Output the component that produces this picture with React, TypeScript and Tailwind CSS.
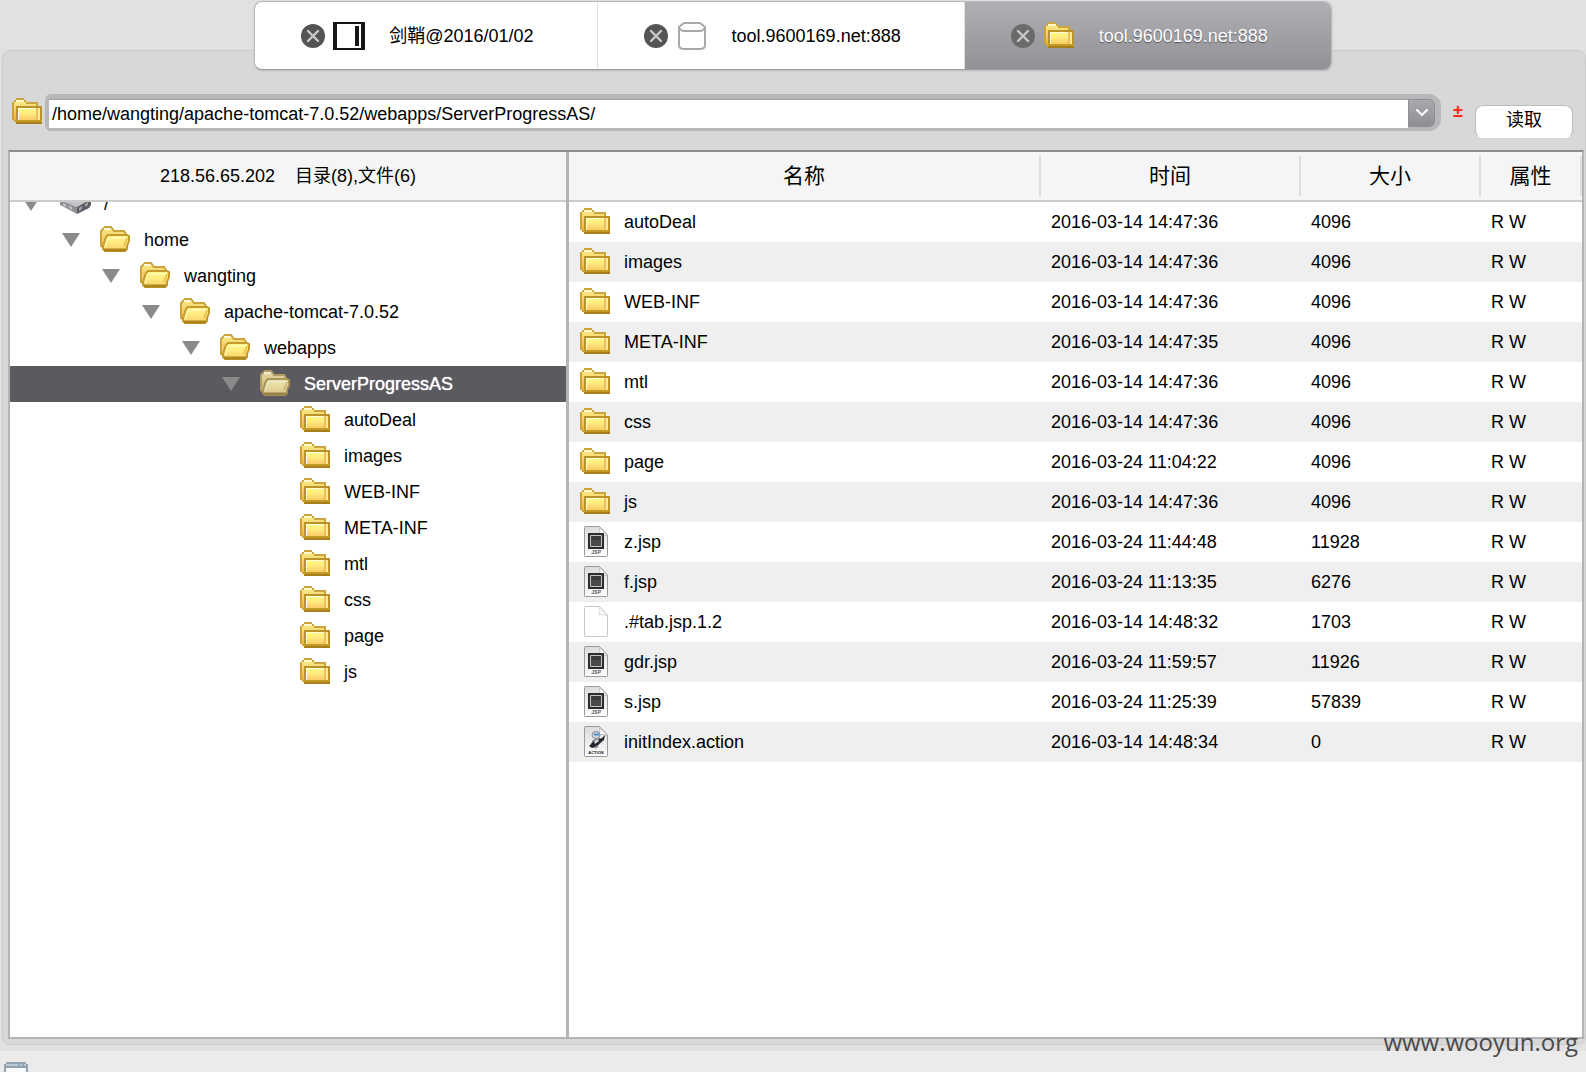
import { useState } from 'react'
import { clsx } from 'clsx'

type IconKind = 'folder' | 'jsp' | 'blank' | 'action'

interface TreeNode {
  name: string
  depth: number
  icon: 'drive' | 'open' | 'folder'
  selected?: boolean
}

interface FileEntry {
  name: string
  time: string
  size: string
  icon: IconKind
}

const tree: TreeNode[] = [
  { name: '/', depth: 0, icon: 'drive' },
  { name: 'home', depth: 1, icon: 'open' },
  { name: 'wangting', depth: 2, icon: 'open' },
  { name: 'apache-tomcat-7.0.52', depth: 3, icon: 'open' },
  { name: 'webapps', depth: 4, icon: 'open' },
  { name: 'ServerProgressAS', depth: 5, icon: 'open', selected: true },
  { name: 'autoDeal', depth: 6, icon: 'folder' },
  { name: 'images', depth: 6, icon: 'folder' },
  { name: 'WEB-INF', depth: 6, icon: 'folder' },
  { name: 'META-INF', depth: 6, icon: 'folder' },
  { name: 'mtl', depth: 6, icon: 'folder' },
  { name: 'css', depth: 6, icon: 'folder' },
  { name: 'page', depth: 6, icon: 'folder' },
  { name: 'js', depth: 6, icon: 'folder' },
]

const files: FileEntry[] = [
  { name: 'autoDeal', time: '2016-03-14 14:47:36', size: '4096', icon: 'folder' },
  { name: 'images', time: '2016-03-14 14:47:36', size: '4096', icon: 'folder' },
  { name: 'WEB-INF', time: '2016-03-14 14:47:36', size: '4096', icon: 'folder' },
  { name: 'META-INF', time: '2016-03-14 14:47:35', size: '4096', icon: 'folder' },
  { name: 'mtl', time: '2016-03-14 14:47:36', size: '4096', icon: 'folder' },
  { name: 'css', time: '2016-03-14 14:47:36', size: '4096', icon: 'folder' },
  { name: 'page', time: '2016-03-24 11:04:22', size: '4096', icon: 'folder' },
  { name: 'js', time: '2016-03-14 14:47:36', size: '4096', icon: 'folder' },
  { name: 'z.jsp', time: '2016-03-24 11:44:48', size: '11928', icon: 'jsp' },
  { name: 'f.jsp', time: '2016-03-24 11:13:35', size: '6276', icon: 'jsp' },
  { name: '.#tab.jsp.1.2', time: '2016-03-14 14:48:32', size: '1703', icon: 'blank' },
  { name: 'gdr.jsp', time: '2016-03-24 11:59:57', size: '11926', icon: 'jsp' },
  { name: 's.jsp', time: '2016-03-24 11:25:39', size: '57839', icon: 'jsp' },
  { name: 'initIndex.action', time: '2016-03-14 14:48:34', size: '0', icon: 'action' },
]

function Gradients() {
  return (
    <svg width="0" height="0" className="absolute" aria-hidden="true">
      <defs>
        <linearGradient id="folderFront" x1="0" y1="0" x2="0" y2="1">
          <stop offset="0" stopColor="#fff98a" />
          <stop offset="0.5" stopColor="#ffe97e" />
          <stop offset="1" stopColor="#fbcb66" />
        </linearGradient>
        <linearGradient id="folderBack" x1="0" y1="0" x2="0" y2="1">
          <stop offset="0" stopColor="#fbec8c" />
          <stop offset="1" stopColor="#ecb340" />
        </linearGradient>
        <linearGradient id="paper" x1="0" y1="0" x2="0" y2="1">
          <stop offset="0" stopColor="#dcdcdc" />
          <stop offset="1" stopColor="#fdfdfd" />
        </linearGradient>
      </defs>
    </svg>
  )
}

function FolderIcon() {
  return (
    <svg width="30" height="28" viewBox="0 0 30 28" className="shrink-0" shapeRendering="crispEdges" aria-hidden="true">
      <path d="M2 2H14V6H26V22H2Z" fill="url(#folderBack)" />
      <path d="M4 0h8v2H4zM2 2h2v2H2zM12 2h2v2h-2zM14 4h12v2H14zM24 6h2v3h-2z" fill="#c9a53c" />
      <path d="M0 4h2v18H0zM2 22h2v2H2z" fill="#cfa238" />
      <path d="M4 2h8v2H4z" fill="#fff9c4" />
      <path d="M4 8H30V24H4Z" fill="#b8942a" />
      <path d="M6 10H28V22H6Z" fill="url(#folderFront)" />
      <path d="M6 10h1v12H6zM6 10h20v1H6z" fill="#fffde0" />
      <path d="M24 10h2v12h-2z" fill="#efc058" />
      <path d="M26 10h2v12h-2z" fill="#ffeba0" />
      <path d="M4 22h26v2H4z" fill="#c39a26" />
      <path d="M4 24h26v2H4z" fill="#a5801a" />
    </svg>
  )
}

function OpenFolderIcon() {
  return (
    <svg width="30" height="28" viewBox="0 0 30 28" className="shrink-0" aria-hidden="true">
      <path d="M1 5L5 1H11L14 5H24L26 7V20L20 24H4L1 21Z" fill="url(#folderBack)" />
      <path d="M1 21V5L3 3L5 1H11L14 5H24L26 8" fill="none" stroke="#cba43a" strokeWidth="2" />
      <path d="M4 3H11" stroke="#fffbd0" strokeWidth="2" />
      <path d="M8 9H27L29 10V15L27 20V23L25 25H5L3 23V20L6 11Z" fill="url(#folderFront)" stroke="#c49b2c" strokeWidth="2" />
      <path d="M5 21L8 12H26" fill="none" stroke="#fffdd8" strokeWidth="1" />
      <path d="M24 20L27 12" stroke="#f0bf55" strokeWidth="2" />
      <path d="M4 24H26" stroke="#ad861c" strokeWidth="3" />
    </svg>
  )
}

function DriveIcon() {
  return (
    <svg width="32" height="28" viewBox="0 0 32 28" className="shrink-0" aria-hidden="true">
      <path d="M16 1L31 9L17 17L0 10Z" fill="#c4c4c8" />
      <path d="M0 10L17 17V24L4 17L0 15Z" fill="#8f8f94" />
      <path d="M17 17L31 9V15L29 18L17 24Z" fill="#5e5e66" />
      <path d="M3 13l3 1v3l-3-1zM9 15l3 2v3l-3-2z" fill="#bcbcc0" />
      <path d="M19 18l3-2v3l-3 2zM25 14l3-2v3l-3 2z" fill="#a2a2aa" />
    </svg>
  )
}

function FileIcon({ kind }: { kind: IconKind }) {
  if (kind === 'folder') return <FolderIcon />

  return (
    <svg width="30" height="32" viewBox="0 0 30 32" className="shrink-0" aria-hidden="true">
      <path
        d="M5 .5H19.500L27.500 9V29.500Q27.500 30.500 26.500 30.500H5Q4.500 30.500 4.500 29.500V1.500Q4.500 .5 5 .5Z"
        fill={kind === 'blank' ? '#ffffff' : 'url(#paper)'}
        stroke={kind === 'blank' ? '#c8c8c8' : '#9c9c9c'}
      />
      <path
        d="M19.500 1Q20.500 6 19 8.500Q24 8 27.500 10Z"
        fill="#ffffff"
        stroke={kind === 'blank' ? '#d0d0d0' : '#b4b4b4'}
        strokeWidth="0.8"
      />
      {kind === 'jsp' && (
        <>
          <path d="M8 7H24V23H8Z" fill="#2c2c2c" />
          <path d="M10.500 9.500H21.500V20.500H10.500Z" fill="#4a4a4a" stroke="#c4c4c4" />
          <path d="M11 10H21V14H11Z" fill="#3a3a3a" />
          <text x="16" y="28" textAnchor="middle" fontSize="5" fontStyle="italic" fontWeight="bold" fill="#555555">
            JSP
          </text>
        </>
      )}
      {kind === 'action' && (
        <>
          <path d="M13 14L20 12L22 15L17 21L12 22L11 18Z" fill="#5b6068" />
          <path d="M9 20L12 17L22 12L25 9L24 14L16 20L12 22Z" fill="#25272c" />
          <path d="M14 15L18 13L19 15L15 18Z" fill="#cfd6dc" />
          <ellipse cx="16" cy="9" rx="4" ry="3.500" fill="#d5dde6" stroke="#6a7380" strokeWidth="0.800" />
          <path d="M14 8.500H19" stroke="#3d8fd0" strokeWidth="2" />
          <path d="M15 22L18 20" stroke="#8b9098" strokeWidth="2" />
          <text x="16" y="28" textAnchor="middle" fontSize="4" fontWeight="bold" fill="#222222">
            ACTION
          </text>
        </>
      )}
    </svg>
  )
}

function CloseIcon() {
  return (
    <svg width="24" height="24" viewBox="0 0 24 24" aria-hidden="true">
      <circle cx="12" cy="12" r="12" fill="currentColor" />
      <path d="M7 7L17 17M17 7L7 17" stroke="#c9c9c9" strokeWidth="2.400" strokeLinecap="round" />
    </svg>
  )
}

function SheathIcon() {
  return (
    <svg width="32" height="28" viewBox="0 0 32 28" aria-hidden="true">
      <path d="M0 0H32V28H0Z" fill="#161616" />
      <path d="M4 2H28V26H4Z" fill="#ffffff" />
      <path d="M22 4H26V24H22Z" fill="#161616" />
    </svg>
  )
}

function DatabaseIcon() {
  return (
    <svg width="28" height="28" viewBox="0 0 28 28" fill="none" stroke="#a8a8a8" strokeWidth="2" aria-hidden="true">
      <path d="M6 1H22L27 5V23Q27 27 22 27H6Q1 27 1 23V5Z" />
      <path d="M1 6Q3 9 6 9H22Q25 9 27 6" />
    </svg>
  )
}

const tabs = [
  { title: '剑鞘@2016/01/02', icon: <SheathIcon /> },
  { title: 'tool.9600169.net:888', icon: <DatabaseIcon /> },
  { title: 'tool.9600169.net:888', icon: <FolderIcon /> },
]

function TabBar() {
  const [active, setActive] = useState(2)

  return (
    <nav className="relative z-10 mx-auto flex h-[69px] overflow-hidden rounded-lg border border-[#b9b9b9] border-b-[#9c9c9c] bg-white shadow-sm">
      {tabs.map((tab, index) => (
        <div
          key={index}
          className={clsx(
            'flex items-center pr-[63px] pl-[46px]',
            index === active
              ? 'bg-linear-to-b from-[#b0afb4] to-[#929196] text-white'
              : 'border-r border-[#e0e0e0] last:border-r-0',
          )}
        >
          <button
            type="button"
            aria-label="关闭"
            className={index === active ? 'text-[#6b6b6b]' : 'text-[#545454]'}
          >
            <CloseIcon />
          </button>
          <button
            type="button"
            onClick={() => setActive(index)}
            className={clsx(
              'flex items-center',
              index === active && '[text-shadow:0_1px_1px_#55555a]',
            )}
          >
            <span className="mr-6 ml-2 flex w-8 justify-center">{tab.icon}</span>
            {tab.title}
          </button>
        </div>
      ))}
    </nav>
  )
}

function AddressBar() {
  return (
    <form className="flex items-start pr-3 pl-[9px]" onSubmit={(e) => e.preventDefault()}>
      <span className="mt-1">
        <FolderIcon />
      </span>
      <div className="ml-[3px] flex h-[37px] flex-1 rounded-l-md rounded-r-xl bg-[#b8b8ba] pt-[5px] pr-[6px] pb-[3px] pl-1">
        <input
          type="text"
          aria-label="路径"
          defaultValue="/home/wangting/apache-tomcat-7.0.52/webapps/ServerProgressAS/"
          className="min-w-0 flex-1 border-t border-[#a0a0a2] bg-white px-[3px] outline-none"
        />
        <button
          type="button"
          aria-label="历史"
          className="flex h-7 w-[27px] items-center justify-center rounded-r-md border border-[#8e8e92] bg-linear-to-b from-[#aaa9ae] to-[#8f8e93]"
        >
          <svg width="12" height="8" viewBox="0 0 12 8" fill="none" stroke="#ffffff" strokeWidth="2" strokeLinecap="round" aria-hidden="true">
            <path d="M1 1L6 6L11 1" />
          </svg>
        </button>
      </div>
      <span className="mt-[5px] w-[34px] text-center font-bold text-[#ff2a1c]">±</span>
      <button
        type="submit"
        className="mt-[11px] h-[33px] w-[98px] rounded-lg border border-[#bcbcbc] border-b-white bg-white pb-1"
      >
        读取
      </button>
    </form>
  )
}

function DirectoryTree() {
  return (
    <section className="flex w-[559px] shrink-0 flex-col border-r-[3px] border-[#b4b4b4]">
      <h2 className="h-[50px] border-b-2 border-[#cccccc] bg-[#f5f5f5] text-center leading-12 whitespace-pre">
        {'218.56.65.202    目录(8),文件(6)'}
      </h2>
      <div className="min-h-0 flex-1 overflow-hidden">
        {/* the list is scrolled down a little, so the root is cut by the header */}
        <ul role="tree" className="-mt-4">
          {tree.map((node) => (
            <li
              key={node.name + node.depth}
              role="treeitem"
              aria-selected={!!node.selected}
              style={{ paddingLeft: node.depth * 40 + 12 }}
              className={clsx('flex h-9 items-center', node.selected && 'bg-[#5b5a5f] text-white')}
            >
              <span className="flex w-[38px] shrink-0">
                {node.icon !== 'folder' && (
                  <svg width="18" height="14" viewBox="0 0 18 14" aria-hidden="true">
                    <path d="M0 0H18L9 14Z" fill="#8a8a8a" />
                  </svg>
                )}
              </span>
              <span className={clsx('flex w-11 shrink-0', node.selected && 'opacity-90 saturate-60')}>
                {node.icon === 'drive' && <DriveIcon />}
                {node.icon === 'open' && <OpenFolderIcon />}
                {node.icon === 'folder' && <FolderIcon />}
              </span>
              <span className={clsx(node.selected && '[text-shadow:0_0_1px_#ffffff]')}>{node.name}</span>
            </li>
          ))}
        </ul>
      </div>
    </section>
  )
}

function FileTable() {
  return (
    <section className="min-w-0 flex-1">
      <table className="w-full table-fixed border-separate border-spacing-0 text-left">
        <colgroup>
          <col />
          <col className="w-[260px]" />
          <col className="w-[180px]" />
          <col className="w-[101px]" />
        </colgroup>
        <thead className="text-[21px]">
          <tr className="bg-[#f5f5f5]">
            {['名称', '时间', '大小', '属性'].map((label) => (
              <th key={label} className="h-[50px] border-b-2 border-[#cccccc] p-0 font-normal">
                <div className="h-10 border-r-2 border-[#dddddd] text-center leading-10">{label}</div>
              </th>
            ))}
          </tr>
        </thead>
        <tbody>
          {files.map((file) => (
            <tr key={file.name} className="h-10 even:bg-[#efefef]">
              <td className="p-0 pl-[11px]">
                <div className="flex items-center gap-[14px]">
                  <FileIcon kind={file.icon} />
                  {file.name}
                </div>
              </td>
              <td className="p-0 pl-[10px]">{file.time}</td>
              <td className="p-0 pl-[10px]">{file.size}</td>
              <td className="p-0 pl-[10px]">R W</td>
            </tr>
          ))}
        </tbody>
      </table>
    </section>
  )
}

export default function App() {
  return (
    <div className="flex h-screen flex-col overflow-hidden bg-[#e1e1e1] pt-px font-['Liberation_Sans','Noto_Sans_CJK_SC',sans-serif] text-[18px] leading-6 text-black">
      <Gradients />
      <TabBar />

      <main className="-mt-[20px] mb-[6px] ml-[2px] flex min-h-0 flex-1 flex-col rounded-lg border border-[#cbcbcb] bg-[#d8d8d8] pt-[43px] pb-[5px]">
        <AddressBar />
        <div className="mt-3 mr-px ml-[5px] flex min-h-0 flex-1 border-2 border-[#b4b4b4] border-t-[#8c8c8c] bg-white">
          <DirectoryTree />
          <FileTable />
        </div>
      </main>

      <footer className="relative h-[21px] bg-[#ebebeb]">
        <svg width="24" height="20" viewBox="0 0 24 20" className="mt-[11px] ml-1" aria-hidden="true">
          <path d="M2 0H22V2H24V20H0V2H2Z" fill="#8fa3b3" />
          <path d="M2 2H14V4H2ZM16 2H18V4H16ZM20 2H22V4H20Z" fill="#b9c8d3" />
          <path d="M2 6H22V20H2Z" fill="#f8fafb" />
        </svg>
        <span className="absolute right-2 bottom-[14px] font-['Open_Sans',sans-serif] text-[24px] leading-8 text-[#4a4a4a]">
          www.wooyun.org
        </span>
      </footer>
    </div>
  )
}
